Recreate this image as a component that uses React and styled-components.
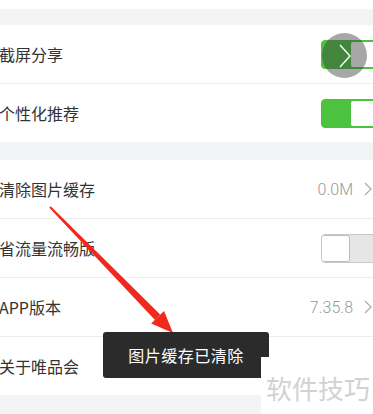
import React from 'react'
import styled, { createGlobalStyle } from 'styled-components'

const Global = createGlobalStyle`
body {
  margin: 0;
  background: #fff;
  font-family: "Noto Sans CJK SC", "Noto Sans", sans-serif;
}
`

//Page
const Page = styled.div`
position: relative;
width: 373px;
height: 414px;
overflow: hidden;
background: #f3f4f6;
`

const TopStrip = styled.div`
height: 9px;
background: #fff;
`

const Gap = styled.div`
height: ${(props) => props.h}px;
`

const Group = styled.div`
background: #fff;
`

//Row : border-bottom except the last one
const Row = styled.div`
height: 58px;
display: flex;
align-items: center;
justify-content: space-between;
border-bottom: 1px solid #ececec;
&:last-child{
  border-bottom: none;
}
`

const Label = styled.span`
font-size: 16px;
color: #333;
margin-left: -1px;
`

const Right = styled.div`
display: flex;
align-items: center;
`

const Value = styled.span`
font-size: 16px;
color: #999;
font-family: "Roboto", "Noto Sans", sans-serif;
font-weight: 300;
margin-right: 10px;
`

const Chevron = styled.svg`
width: 10px;
height: 16px;
`

//Switch : the knob side runs off the right edge
const Switch = styled.div`
position: relative;
width: 58px;
height: 29px;
margin-right: -6px;
border-radius: 4px;
box-sizing: border-box;
display: flex;
overflow: hidden;
border: 1px solid ${(props) => (props.on ? '#4cc23f' : '#c8c8c8')};
background: ${(props) => (props.on ? '#4cc23f' : '#e6e6e6')};
`

const Knob = styled.div`
width: 29px;
height: 100%;
background: #fff;
border-radius: 3px;
margin-left: ${(props) => (props.on ? '28px' : '-1px')};
box-sizing: border-box;
border: 1px solid ${(props) => (props.on ? '#4cc23f' : '#bdbdbd')};
`

const Touch = styled.div`
position: absolute;
left: 322px;
top: 33px;
width: 45px;
height: 45px;
border-radius: 50%;
background: rgba(60, 60, 60, 0.45);
display: flex;
align-items: center;
justify-content: center;
`

const Toast = styled.div`
position: absolute;
left: 103px;
top: 332px;
width: 166px;
height: 46px;
border-radius: 3px;
background: #2b2b2b;
color: #fff;
font-size: 16px;
display: flex;
align-items: center;
justify-content: center;
letter-spacing: 0.5px;
`

const Watermark = styled.div`
position: absolute;
left: 261px;
top: 357px;
width: 112px;
height: 57px;
background: #fff;
color: #d2d2d2;
font-size: 26px;
display: flex;
align-items: center;
padding-left: 5px;
box-sizing: border-box;
padding-top: 4px;
`

const Arrow = styled.svg`
position: absolute;
left: 0;
top: 0;
pointer-events: none;
`

const Arr = () => (
  <Chevron viewBox="0 0 10 16">
    <path d="M2 2 L8 8 L2 14" fill="none" stroke="#aaa" strokeWidth="1.2" />
  </Chevron>
)

const SettingRow = ({ label, value, toggle }) => (
  <Row>
    <Label>{label}</Label>
    <Right>
      {value !== undefined && (
        <>
          <Value>{value}</Value>
          <Arr />
        </>
      )}
      {toggle !== undefined && (
        <Switch on={toggle ? 1 : 0}>
          <Knob on={toggle ? 1 : 0} />
        </Switch>
      )}
    </Right>
  </Row>
)

const App = () => {
  return (
    <Page>
      <Global />
      <TopStrip />
      <Gap h={16} />
      <Group>
        <SettingRow label="截屏分享" toggle={true} />
        <SettingRow label="个性化推荐" toggle={true} />
      </Group>
      <Gap h={18} />
      <Group>
        <SettingRow label="清除图片缓存" value="0.0M" />
        <SettingRow label="省流量流畅版" toggle={false} />
        <SettingRow label="APP版本" value="7.35.8" />
        <SettingRow label="关于唯品会" />
      </Group>

      <Touch>
        <svg width="16" height="26" viewBox="0 0 16 26">
          <path d="M3 2 L13 13 L3 24" fill="none" stroke="#fff" strokeWidth="1.4" />
        </svg>
      </Touch>

      <Arrow width="373" height="414">
        <polygon points="50.7,206.3 49.3,207.7 155,320 160.2,314.6" fill="#f0281e" />
        <polygon points="164,311 151.2,323.6 173,333" fill="#f0281e" />
      </Arrow>

      <Toast>图片缓存已清除</Toast>
      <Watermark>软件技巧</Watermark>
    </Page>
  )
}

export default App
